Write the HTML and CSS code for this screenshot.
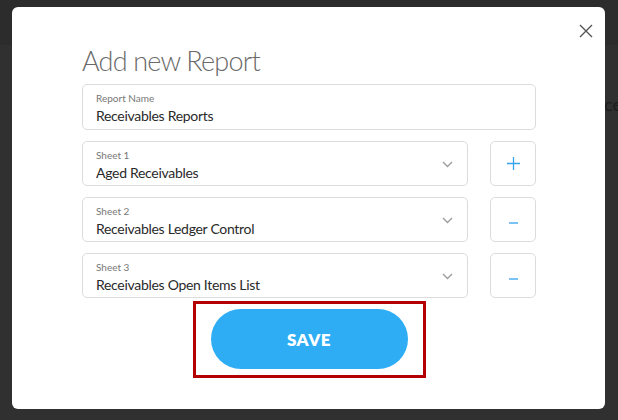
FILE: index.html
```html
<!DOCTYPE html>
<html lang="en">
<head>
<meta charset="utf-8">
<title>Add new Report</title>
<link rel="stylesheet" href="styles.css">
</head>
<body>
<div class="page">
  <div class="page-header"></div>
  <span class="bg-text">ce</span>
  <div class="modal">
    <button class="close" aria-label="Close">
      <svg width="14" height="14" viewBox="0 0 14 14"><path d="M1 1 L13 13 M13 1 L1 13" stroke="#555" stroke-width="1.4" fill="none"/></svg>
    </button>
    <h1 class="title">Add new Report</h1>
    <div class="form">
      <div class="field field-wide">
        <div class="field-text">
          <span class="label">Report Name</span>
          <span class="value">Receivables Reports</span>
        </div>
      </div>
      <div class="row">
        <div class="field select">
          <div class="field-text">
            <span class="label">Sheet 1</span>
            <span class="value">Aged Receivables</span>
          </div>
          <svg class="chevron" width="11" height="7" viewBox="0 0 11 7"><path d="M1 1 L5.5 5.5 L10 1" stroke="#999" stroke-width="1.3" fill="none"/></svg>
        </div>
        <button class="icon-btn" aria-label="Add sheet">
          <svg width="13" height="13" viewBox="0 0 13 13"><path d="M6.5 0 V13 M0 6.5 H13" stroke="#35a3ee" stroke-width="1.3" fill="none"/></svg>
        </button>
      </div>
      <div class="row">
        <div class="field select">
          <div class="field-text">
            <span class="label">Sheet 2</span>
            <span class="value">Receivables Ledger Control</span>
          </div>
          <svg class="chevron" width="11" height="7" viewBox="0 0 11 7"><path d="M1 1 L5.5 5.5 L10 1" stroke="#999" stroke-width="1.3" fill="none"/></svg>
        </div>
        <button class="icon-btn minus" aria-label="Remove sheet">
          <svg width="9" height="2" viewBox="0 0 9 2"><path d="M0 1 H9" stroke="#35a3ee" stroke-width="1.3" fill="none"/></svg>
        </button>
      </div>
      <div class="row">
        <div class="field select">
          <div class="field-text">
            <span class="label">Sheet 3</span>
            <span class="value">Receivables Open Items List</span>
          </div>
          <svg class="chevron" width="11" height="7" viewBox="0 0 11 7"><path d="M1 1 L5.5 5.5 L10 1" stroke="#999" stroke-width="1.3" fill="none"/></svg>
        </div>
        <button class="icon-btn minus" aria-label="Remove sheet">
          <svg width="9" height="2" viewBox="0 0 9 2"><path d="M0 1 H9" stroke="#35a3ee" stroke-width="1.3" fill="none"/></svg>
        </button>
      </div>
      <div class="actions">
        <div class="highlight">
          <button class="save">SAVE</button>
        </div>
      </div>
    </div>
  </div>
</div>
</body>
</html>
```

FILE: styles.css
```css
* { box-sizing: border-box; }
html, body {
  margin: 0;
  padding: 0;
}
body {
  width: 618px;
  height: 420px;
  overflow: hidden;
  background: #303030;
  font-family: Lato, "Open Sans", "Liberation Sans", sans-serif;
}
.page {
  position: relative;
  width: 618px;
  height: 420px;
}
.page-header {
  height: 45px;
  background: #2c2c2c;
}
.bg-text {
  position: absolute;
  left: 604px;
  top: 93px;
  font-size: 18px;
  color: #1c1c1c;
}
.modal {
  position: absolute;
  left: 12px;
  top: 7px;
  width: 593px;
  height: 402px;
  background: #fff;
  border-radius: 6px;
  padding: 37px 69px 0 70px;
}
.close {
  position: absolute;
  top: 17px;
  right: 12px;
  width: 14px;
  height: 14px;
  padding: 0;
  border: 0;
  background: none;
  display: flex;
}
.title {
  margin: 0 0 6px;
  font-size: 27px;
  line-height: 34px;
  font-weight: 300;
  color: #6a6a6a;
  letter-spacing: -0.8px;
}
.form {
  display: flex;
  flex-direction: column;
  gap: 11px;
}
.field {
  height: 45px;
  border: 1px solid #dcdcdc;
  border-radius: 5px;
  padding: 7px 14px 0 13px;
  display: flex;
  align-items: flex-start;
}
.field-wide {
  height: 46px;
}
.field-text {
  flex: 1;
  display: flex;
  flex-direction: column;
  gap: 3px;
}
.label {
  font-size: 10px;
  line-height: 12px;
  color: #777;
}
.value {
  font-size: 14px;
  line-height: 18px;
  color: #2a2a2a;
  letter-spacing: -0.3px;
}
.chevron {
  align-self: center;
  margin-top: -6px;
}
.row {
  display: grid;
  grid-template-columns: 386px 46px;
  column-gap: 22px;
}
.icon-btn {
  height: 45px;
  border: 1px solid #dcdcdc;
  border-radius: 5px;
  background: #fff;
  padding: 0;
  display: flex;
  align-items: center;
  justify-content: center;
}
.icon-btn.minus svg {
  margin-top: 6px;
}
.actions {
  display: flex;
  justify-content: center;
  margin-top: -8px;
}
.highlight {
  border: 3px solid #b30000;
  padding: 5px 15px 6px;
}
.save {
  width: 197px;
  height: 60px;
  border: 0;
  border-radius: 30px;
  background: #2eadf5;
  color: #fff;
  font-family: inherit;
  font-size: 17px;
  font-weight: 800;
  letter-spacing: 0.5px;
}
```
